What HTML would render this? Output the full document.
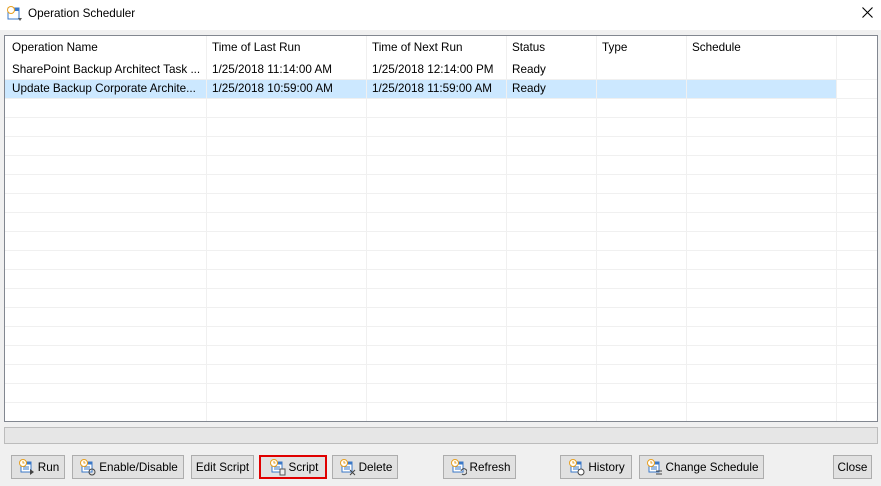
<!DOCTYPE html>
<html><head><style>
*{margin:0;padding:0;box-sizing:border-box}
body{width:881px;height:486px;background:#f0f0f0;font-family:"Liberation Sans",sans-serif;font-size:11.7px;color:#000;position:relative;overflow:hidden}
.title{position:absolute;left:0;top:0;width:881px;height:30px;background:#fff}
.abs{position:absolute;white-space:nowrap}
.list{position:absolute;left:4px;top:35px;width:874px;height:387px;border:1px solid #828790;background:#fff;overflow:hidden}
.hl{position:absolute;left:0;width:872px;height:1px;background:#f0f0f0}
.vl{position:absolute;top:0;width:1px;height:387px;background:#f0f0f0}
.sel{position:absolute;left:0;top:43px;width:831px;height:19px;background:#cce8ff}
.btn{position:absolute;top:455px;height:24px;border:1px solid #adadad;background:#e1e1e1;display:flex;align-items:center;justify-content:center;gap:3px}
.btn svg{width:18px;height:18px}
</style></head><body>
<div class="title"></div>
<svg class="abs" style="left:6px;top:5px" width="18" height="18" viewBox="0 0 18 18"><rect x="2" y="3" width="11" height="11" fill="#fff" stroke="#3a78c8"/><rect x="2" y="3" width="11" height="3" fill="#3a78c8"/><circle cx="5" cy="5" r="3.5" fill="#fff" stroke="#e8a020"/><path d="M12 13h4l-2 3z" fill="#555"/></svg>
<div class="abs" style="left:28px;top:7px">Operation Scheduler</div>
<svg class="abs" style="left:862px;top:7px" width="11" height="11" viewBox="0 0 11 11"><path d="M0.5 0.5l10 10M10.5 0.5l-10 10" stroke="#000" stroke-width="1.1"/></svg>
<div class="list">
<div class="sel"></div>
<div class="vl" style="left:201px"></div><div class="vl" style="left:361px"></div><div class="vl" style="left:501px"></div><div class="vl" style="left:591px"></div><div class="vl" style="left:681px"></div><div class="vl" style="left:831px"></div>
<div class="hl" style="top:43px"></div><div class="hl" style="top:62px"></div><div class="hl" style="top:81px"></div><div class="hl" style="top:100px"></div><div class="hl" style="top:119px"></div><div class="hl" style="top:138px"></div><div class="hl" style="top:157px"></div><div class="hl" style="top:176px"></div><div class="hl" style="top:195px"></div><div class="hl" style="top:214px"></div><div class="hl" style="top:233px"></div><div class="hl" style="top:252px"></div><div class="hl" style="top:271px"></div><div class="hl" style="top:290px"></div><div class="hl" style="top:309px"></div><div class="hl" style="top:328px"></div><div class="hl" style="top:347px"></div><div class="hl" style="top:366px"></div>
<div class="abs" style="left:7px;top:5px">Operation Name</div><div class="abs" style="left:207px;top:5px">Time of Last Run</div><div class="abs" style="left:367px;top:5px">Time of Next Run</div><div class="abs" style="left:507px;top:5px">Status</div><div class="abs" style="left:597px;top:5px">Type</div><div class="abs" style="left:687px;top:5px">Schedule</div>
<div class="abs" style="left:7px;top:27px">SharePoint Backup Architect Task ...</div><div class="abs" style="left:207px;top:27px">1/25/2018 11:14:00 AM</div><div class="abs" style="left:367px;top:27px">1/25/2018 12:14:00 PM</div><div class="abs" style="left:507px;top:27px">Ready</div>
<div class="abs" style="left:7px;top:46px">Update Backup Corporate Archite...</div><div class="abs" style="left:207px;top:46px">1/25/2018 10:59:00 AM</div><div class="abs" style="left:367px;top:46px">1/25/2018 11:59:00 AM</div><div class="abs" style="left:507px;top:46px">Ready</div>
</div>
<div class="abs" style="left:4px;top:427px;width:874px;height:17px;border:1px solid #bcbcbc;background:#e6e6e6"></div>
<svg width="0" height="0" style="position:absolute"><defs><g id="ic"><rect x="4" y="4" width="10" height="10" fill="#fff" stroke="#3a78c8"/><rect x="4" y="4" width="10" height="2.5" fill="#3a78c8"/><path d="M6 9h6M6 11h6" stroke="#3a78c8"/><circle cx="6" cy="5" r="3.5" fill="#fff" stroke="#e8a020"/><path d="M6 3v2h1.5" stroke="#e8a020" fill="none"/></g></defs></svg>
<div class="btn" style="left:11px;width:54px"><svg viewBox="0 0 18 18"><use href="#ic"/><path d="M13 11l4 3-4 3z" fill="#444"/></svg>Run</div>
<div class="btn" style="left:72px;width:112px"><svg viewBox="0 0 18 18"><use href="#ic"/><circle cx="14" cy="14" r="3" fill="none" stroke="#444"/></svg>Enable/Disable</div>
<div class="btn" style="left:191px;width:63px">Edit Script</div>
<div class="btn" style="left:259px;width:68px;border:2px solid #e00000"><svg viewBox="0 0 18 18"><use href="#ic"/><rect x="12" y="11" width="5" height="6" fill="#eee" stroke="#555"/></svg>Script</div>
<div class="btn" style="left:332px;width:66px"><svg viewBox="0 0 18 18"><use href="#ic"/><path d="M12 12l5 5M17 12l-5 5" stroke="#444"/></svg>Delete</div>
<div class="btn" style="left:443px;width:73px"><svg viewBox="0 0 18 18"><use href="#ic"/><path d="M12 13a3 3 0 1 1 1 3" stroke="#444" fill="none"/></svg>Refresh</div>
<div class="btn" style="left:560px;width:72px"><svg viewBox="0 0 18 18"><use href="#ic"/><circle cx="14" cy="14" r="3" fill="#fff" stroke="#444"/></svg>History</div>
<div class="btn" style="left:639px;width:125px"><svg viewBox="0 0 18 18"><use href="#ic"/><path d="M11 13h6M11 16h6" stroke="#444"/></svg>Change Schedule</div>
<div class="btn" style="left:833px;width:39px">Close</div>
</body></html>
